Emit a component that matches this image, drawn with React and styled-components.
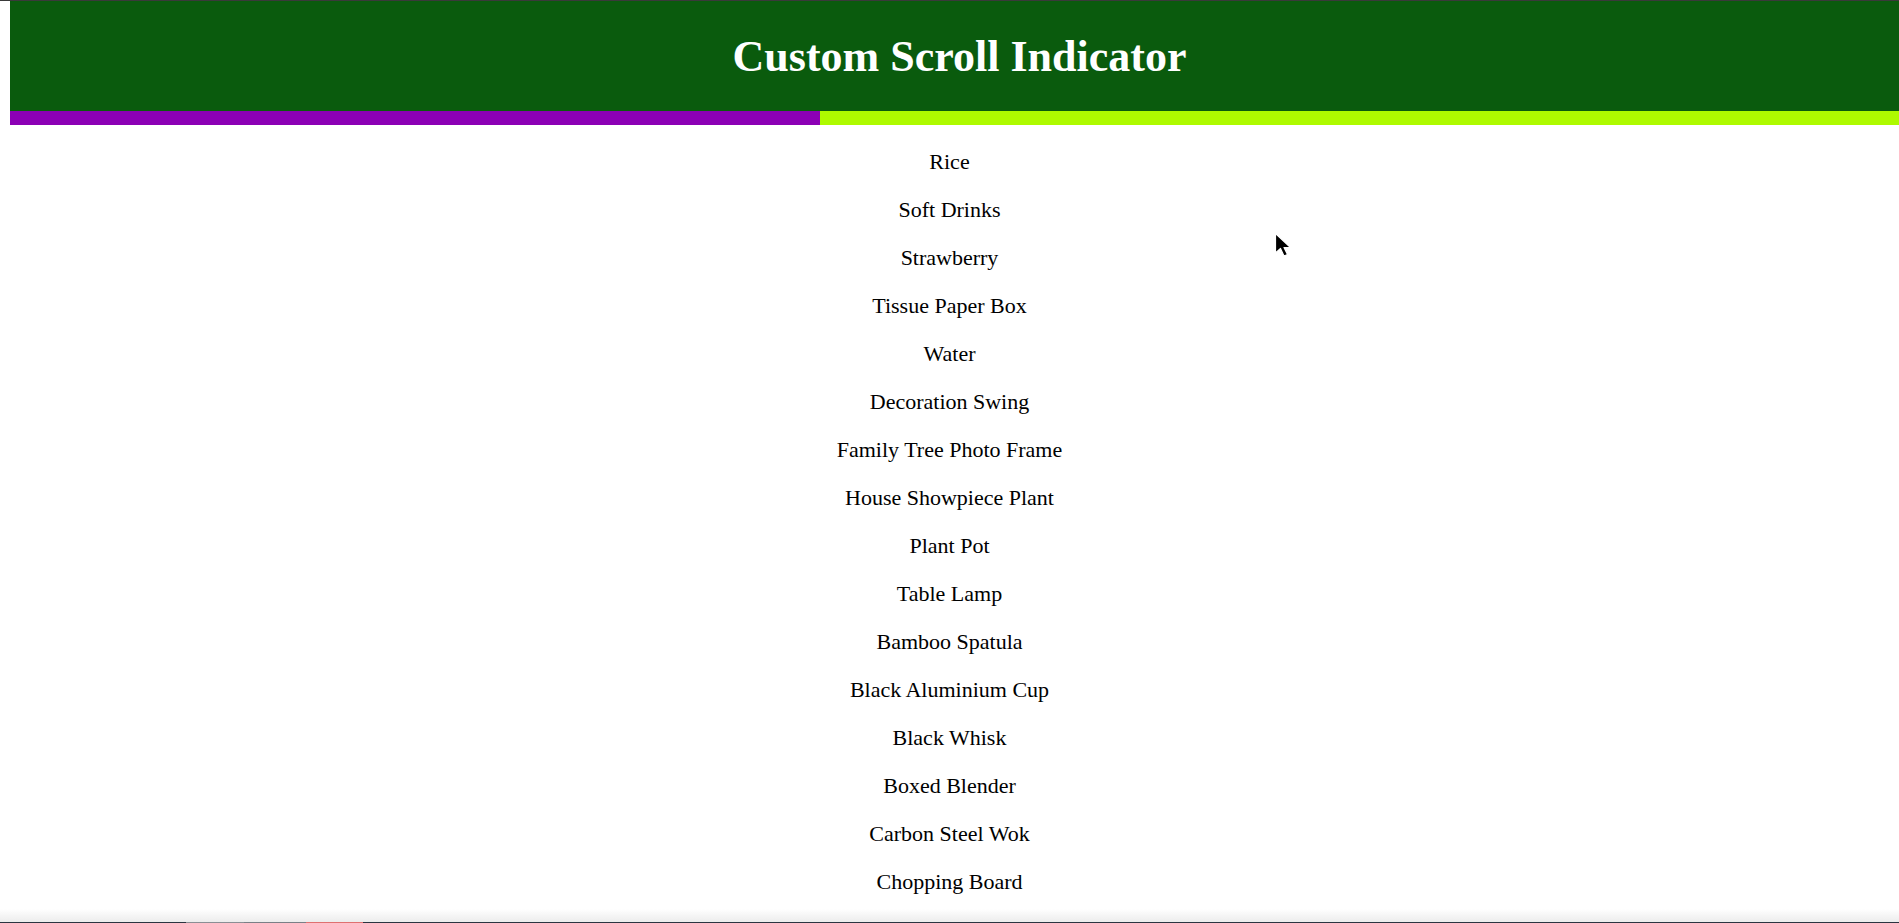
import React from "react";
import styled, { createGlobalStyle } from "styled-components";

const GlobalStyle = createGlobalStyle`
  html, body {
    background: #ffffff;
  }
  body {
    margin: 8px;
    font-family: "Liberation Serif", "Times New Roman", serif;
    color: #000000;
    overflow: hidden;
  }
`;

const TopEdge = styled.div`
  position: fixed;
  top: 0;
  left: 0;
  right: 0;
  height: 1px;
  background: #3a3a3a;
  z-index: 20;
`;

const Header = styled.header`
  position: fixed;
  top: 1px;
  left: 10px;
  width: 100vw;
  display: flex;
  flex-direction: column;
  z-index: 10;
`;

const TitleBar = styled.div`
  height: 110px;
  background: #0a5b0d;
  display: flex;
  align-items: center;
  justify-content: center;
`;

const Title = styled.h1`
  margin: 0;
  font-family: "Liberation Serif", "Times New Roman", serif;
  font-size: 44px;
  font-weight: 700;
  color: #ffffff;
`;

const Track = styled.div`
  height: 14px;
  background: #aefa00;
  display: flex;
`;

const Fill = styled.div`
  height: 100%;
  background: #8c00b5;
`;

const List = styled.main`
  display: flex;
  flex-direction: column;
  align-items: center;
  gap: 22px;
  padding-top: 141px;
`;

const Item = styled.p`
  margin: 0;
  font-size: 22px;
  line-height: 26px;
  text-align: center;
`;

const Cursor = styled.svg`
  position: fixed;
  left: 1274px;
  top: 232px;
  width: 20px;
  height: 28px;
  z-index: 30;
`;

const BottomShade = styled.div`
  position: fixed;
  left: 0;
  right: 0;
  bottom: 0;
  display: flex;
  flex-direction: column;
  z-index: 25;
`;

const Fade = styled.div`
  height: 13px;
  background: linear-gradient(to bottom, rgba(240, 240, 240, 0), #ececec);
`;

const Taskbar = styled.div`
  height: 1px;
  display: flex;
  background: #2b3440;
`;

const Segment = styled.div`
  width: ${(p) => p.$w}px;
  background: ${(p) => p.$c};
`;

const items = [
  "Rice",
  "Soft Drinks",
  "Strawberry",
  "Tissue Paper Box",
  "Water",
  "Decoration Swing",
  "Family Tree Photo Frame",
  "House Showpiece Plant",
  "Plant Pot",
  "Table Lamp",
  "Bamboo Spatula",
  "Black Aluminium Cup",
  "Black Whisk",
  "Boxed Blender",
  "Carbon Steel Wok",
  "Chopping Board",
  "Electric Kettle",
  "Frying Pan",
];

export default function App() {
  const progress = 810;
  return (
    <>
      <GlobalStyle />
      <TopEdge />
      <Header>
        <TitleBar>
          <Title>Custom Scroll Indicator</Title>
        </TitleBar>
        <Track>
          <Fill style={{ width: `${progress}px` }} />
        </Track>
      </Header>
      <List>
        {items.map((t) => (
          <Item key={t}>{t}</Item>
        ))}
      </List>
      <Cursor viewBox="0 0 20 28">
        <path
          d="M1.5 1.5 L1.5 21 L6.5 16.5 L10 24 L13.5 22.5 L10 15.5 L16.5 15.5 Z"
          fill="#000"
          stroke="#fff"
          strokeWidth="1.2"
          strokeLinejoin="round"
        />
      </Cursor>
      <BottomShade>
        <Fade />
        <Taskbar>
          <Segment $w={186} $c="#2b3440" />
          <Segment $w={58} $c="#8a8e94" />
          <Segment $w={62} $c="#7a7f86" />
          <Segment $w={57} $c="#e07070" />
        </Taskbar>
      </BottomShade>
    </>
  );
}
